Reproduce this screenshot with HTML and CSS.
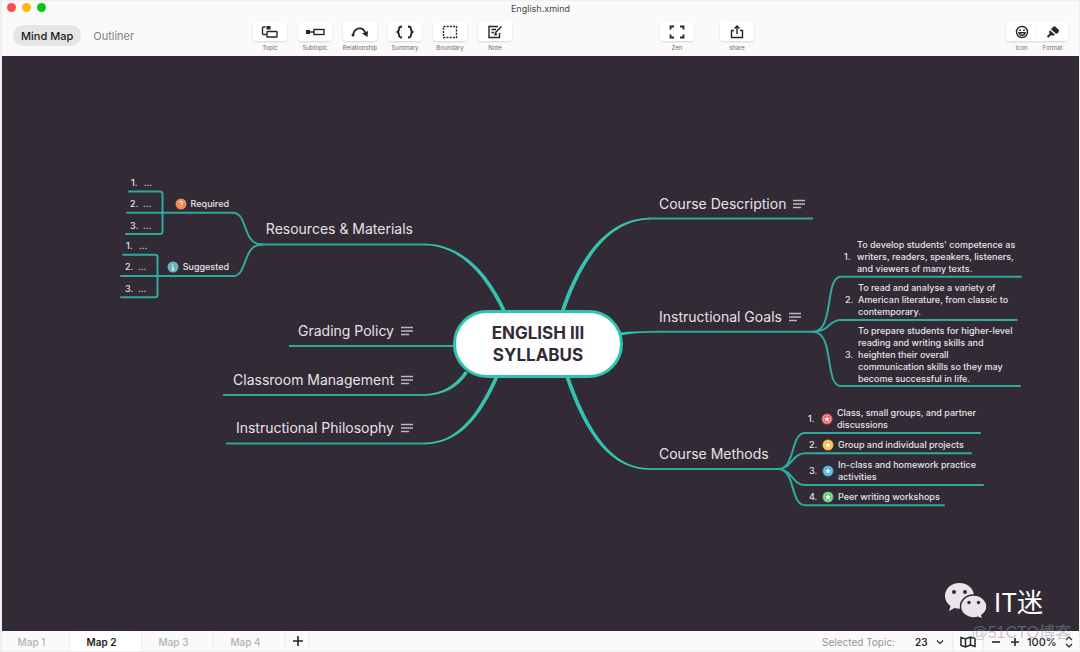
FILE: index.html
```html
<!DOCTYPE html>
<html lang="en">
<head>
<meta charset="utf-8">
<title>English.xmind</title>
<link rel="stylesheet" href="styles.css">
</head>
<body>
<div class="window">
  <header class="header">
    <div class="titlebar">
      <div class="lights"><span class="light close"></span><span class="light minimize"></span><span class="light zoom"></span></div>
      <span class="title">English.xmind</span>
    </div>
    <div class="toolbar">
      <nav class="modes">
        <button class="mode active">Mind Map</button>
        <button class="mode">Outliner</button>
      </nav>
      <div class="tools">
        <button class="tool"><span class="face"><svg class="icon" viewBox="0 0 18 16"><path d="M4.500 3H2.500Q1.500 3 1.500 4V9.500Q1.500 10.500 2.500 10.500H5.500"/><rect x="6" y="7.500" width="10" height="5.500" rx=".5"/><path class="solid" d="M5.500 2h4v3.500h-4z"/></svg></span>Topic</button>
        <button class="tool"><span class="face"><svg class="icon wide" viewBox="0 0 20 16"><path d="M4 8h5"/><path class="solid" d="M1 6h4v4H1z"/><rect x="9" y="5.500" width="10" height="5"/></svg></span>Subtopic</button>
        <button class="tool"><span class="face"><svg class="icon wide" viewBox="0 0 20 16"><path class="heavy" d="M3 11C5 2.500 13 2.500 15.500 9"/><circle class="solid" cx="3" cy="11" r="1.500"/><path class="solid" d="M12 9.500L18 7l-.5 6z"/></svg></span>Relationship</button>
        <button class="tool"><span class="face"><svg class="icon wide" viewBox="0 0 20 16"><path class="heavy" d="M7 2.500Q4 2.500 4 5Q4 8 1.500 8Q4 8 4 11Q4 13.500 7 13.500M13 2.500q3 0 3 2.500q0 3 2.500 3q-2.500 0-2.500 3q0 2.500-3 2.500"/></svg></span>Summary</button>
        <button class="tool"><span class="face"><svg class="icon" viewBox="0 0 18 16"><rect x="2.500" y="2.500" width="13" height="11" stroke-dasharray="2 1.200"/></svg></span>Boundary</button>
        <button class="tool"><span class="face"><svg class="icon" viewBox="0 0 18 16"><path d="M12 2.500H3v11h10.500V9M5.500 5.500H10M5.500 8.500H8M9 10.500l1-2.500 5.500-5.500M8.500 11l2.500-1"/></svg></span>Note</button>
      </div>
      <div class="gap-a"></div>
      <div class="tools spaced">
        <button class="tool"><span class="face"><svg class="icon" viewBox="0 0 18 16"><path class="heavy" d="M2.500 5.500V2.500H6M12 2.500h3.500v3M15.500 10.500v3H12M6 13.500H2.500v-3"/></svg></span>Zen</button>
        <button class="tool"><span class="face"><svg class="icon" viewBox="0 0 18 16"><path d="M6 6.500H3.500v7h11v-7H12M9 10V2.500M6.500 4.500L9 2l2.500 2.500"/></svg></span>share</button>
      </div>
      <div class="gap-b"></div>
      <div class="tools joined">
        <button class="tool"><span class="face"><svg class="icon" viewBox="0 0 18 16"><circle cx="9" cy="8" r="5.500"/><path d="M6 8.800h6Q11.500 11.200 9 11.200T6 8.800z"/><circle class="solid" cx="7" cy="6.200" r=".9"/><circle class="solid" cx="11" cy="6.200" r=".9"/></svg></span>Icon</button>
        <button class="tool"><span class="face"><svg class="icon" viewBox="0 0 18 16"><path class="solid" d="M8.500 3.500l2-1.500 4.500 4-.8 3-2.200.8-5-4.500zM6 6.200l5 4.600-2.200 1-1.500-.8-3 2.700-1.500-1.400 2.900-2.600-.6-2z"/></svg></span>Format</button>
      </div>
    </div>
  </header>

  <main class="canvas">
    <div class="stage">
      <svg class="lines" viewBox="2 56 1076 575" aria-hidden="true">
        <g class="taper">
          <path d="M507 313C488 270 460 244 425 243.700V245.300C458 246 484 272 503 313z"/>
          <path d="M560 313C580 252 610 218 650 217.800V219.400C612 220 584 254 564 313z"/>
          <path d="M620 332.500Q634 331 658 331V332.500Q634 332.500 620 335.500z"/>
          <path d="M565 376C586 438 612 469.500 650 469.800V468.200C614 468 590 436 569 376z"/>
          <path d="M499 376C480 420 458 443.500 425 444.300V442.700C456 442 476 418 495 376z"/>
          <path d="M468 373Q453 395 425 395.800V394.200Q450 393 465 371z"/>
        </g>
        <g class="main-line">
          <path d="M260 244.500H427M289 346H455M223 395H427M226 443.500H427M648 218.500H813M655 331.700H816M648 469H780"/>
        </g>
        <g class="sub-line">
          <path d="M129 191.500H160Q162.500 191.500 162.500 194V231.500Q162.500 234 160 234H126"/>
          <path d="M127 212.700H233C248 212.700 242 244.500 262 244.500"/>
          <path d="M123 254.700H155Q157.500 254.700 157.500 257V295Q157.500 297.300 155 297.300H121"/>
          <path d="M121 276H233C248 276 242 244.500 262 244.500"/>
          <path d="M813 331.700C835 331.700 824 276.800 841 276.800H1021M813 331.700C830 331.700 828 320 841 320H1017M813 331.700C835 331.700 824 386 841 386H1020"/>
          <path d="M778 469C796 469 790 433 805 433H980M778 469C792 469 792 453.300 805 453.300H971M778 469C792 469 792 485 805 485H983M778 469C796 469 790 505.300 805 505.300H944"/>
        </g>
      </svg>

      <h1 class="root">ENGLISH III<br>SYLLABUS</h1>

      <div class="topic course-description">Course Description<svg class="note" viewBox="0 0 12 10"><path d="M0 1.500H12M0 5H12M0 8.500H8"/></svg></div>
      <div class="topic instructional-goals">Instructional Goals<svg class="note" viewBox="0 0 12 10"><path d="M0 1.500H12M0 5H12M0 8.500H8"/></svg></div>
      <div class="topic course-methods">Course Methods</div>
      <div class="topic resources">Resources &amp; Materials</div>
      <div class="topic grading">Grading Policy<svg class="note" viewBox="0 0 12 10"><path d="M0 1.500H12M0 5H12M0 8.500H8"/></svg></div>
      <div class="topic classroom">Classroom Management<svg class="note" viewBox="0 0 12 10"><path d="M0 1.500H12M0 5H12M0 8.500H8"/></svg></div>
      <div class="topic philosophy">Instructional Philosophy<svg class="note" viewBox="0 0 12 10"><path d="M0 1.500H12M0 5H12M0 8.500H8"/></svg></div>

      <div class="sub required"><svg class="marker orange" viewBox="0 0 12 12"><circle cx="6" cy="6" r="5.500"/><path class="stroke" d="M4.500 4.500Q4.500 3.200 6 3.200T7.500 4.600Q7.500 5.500 6 6.200V7M6 8.200v1"/></svg>Required</div>
      <div class="sub suggested"><svg class="marker teal" viewBox="0 0 12 12"><circle cx="6" cy="6" r="5.500"/><path class="stroke" d="M6 3v1M5 5.500h1V9M4.800 9h2.400"/></svg>Suggested</div>

      <div class="sub req-1"><span class="num">1.</span>...</div>
      <div class="sub req-2"><span class="num">2.</span>...</div>
      <div class="sub req-3"><span class="num">3.</span>...</div>
      <div class="sub sug-1"><span class="num">1.</span>...</div>
      <div class="sub sug-2"><span class="num">2.</span>...</div>
      <div class="sub sug-3"><span class="num">3.</span>...</div>

      <div class="sub goal-1"><span class="num">1.</span><span>To develop students' competence as<br>writers, readers, speakers, listeners,<br>and viewers of many texts.</span></div>
      <div class="sub goal-2"><span class="num">2.</span><span>To read and analyse a variety of<br>American literature, from classic to<br>contemporary.</span></div>
      <div class="sub goal-3"><span class="num">3.</span><span>To prepare students for higher-level<br>reading and writing skills and<br>heighten their overall<br>communication skills so they may<br>become successful in life.</span></div>

      <div class="sub method-1"><span class="num">1.</span><svg class="marker red" viewBox="0 0 12 12"><circle cx="6" cy="6" r="5.500"/><circle class="ring" cx="6" cy="6" r="4"/><path class="star" d="M6 3l.9 2 2.100.2-1.600 1.400.5 2.100L6 7.600 4.100 8.700l.5-2.100L3 5.200 5.100 5z"/></svg><span>Class, small groups, and partner<br>discussions</span></div>
      <div class="sub method-2"><span class="num">2.</span><svg class="marker yellow" viewBox="0 0 12 12"><circle cx="6" cy="6" r="5.500"/><circle class="ring" cx="6" cy="6" r="4"/><path class="star" d="M6 3l.9 2 2.100.2-1.600 1.400.5 2.100L6 7.600 4.100 8.700l.5-2.100L3 5.200 5.100 5z"/></svg><span>Group and individual projects</span></div>
      <div class="sub method-3"><span class="num">3.</span><svg class="marker blue" viewBox="0 0 12 12"><circle cx="6" cy="6" r="5.500"/><circle class="ring" cx="6" cy="6" r="4"/><path class="star" d="M6 3l.9 2 2.100.2-1.600 1.400.5 2.100L6 7.600 4.100 8.700l.5-2.100L3 5.200 5.100 5z"/></svg><span>In-class and homework practice<br>activities</span></div>
      <div class="sub method-4"><span class="num">4.</span><svg class="marker green" viewBox="0 0 12 12"><circle cx="6" cy="6" r="5.500"/><circle class="ring" cx="6" cy="6" r="4"/><path class="star" d="M6 3l.9 2 2.100.2-1.600 1.400.5 2.100L6 7.600 4.100 8.700l.5-2.100L3 5.200 5.100 5z"/></svg><span>Peer writing workshops</span></div>
    </div>
    <div class="brand">
      <svg class="wechat" viewBox="0 0 44 38"><path d="M15.500 1C7 1 1 6.700 1 14c0 4.200 2.200 7.700 5.500 10L5 29l5.500-3c1.800.5 3.300.7 5 .7C24 26.700 30 21 30 14S24 1 15.500 1z"/><path class="front" d="M29.500 13C22.300 13 16.500 18 16.500 24.500S22.300 36 29.500 36c1.700 0 3.200-.3 4.600-.8L39 37.500l-1.200-4.200C40.800 31.200 43 28.200 43 24.500 43 18 36.700 13 29.500 13z"/><g class="eye"><circle cx="10" cy="10" r="2"/><circle cx="21" cy="10" r="2"/><circle cx="25" cy="20.500" r="1.700"/><circle cx="34.500" cy="20.500" r="1.700"/></g></svg>
      <span>IT迷</span>
    </div>
  </main>

  <footer class="footer">
    <nav class="sheets">
      <button class="sheet">Map 1</button>
      <button class="sheet active">Map 2</button>
      <button class="sheet">Map 3</button>
      <button class="sheet">Map 4</button>
      <button class="add" aria-label="Add map"><svg viewBox="0 0 10 10"><path d="M5 0V10M0 5H10"/></svg></button>
    </nav>
    <div class="status">
      <label class="selected" for="topic-count">Selected Topic:</label>
      <span class="picker count"><select id="topic-count"><option>23</option></select><svg viewBox="0 0 8 12"><path d="M1 4.500l3 3 3-3"/></svg></span>
      <button class="overview" aria-label="Map overview"><svg viewBox="0 0 16 12"><path d="M1 1.500L5.500 3L10.500 1L15 2.500V10.500L10.500 9L5.500 11L1 9.500zM5.500 3V11M10.500 1V9"/></svg></button>
      <button class="step" aria-label="Zoom out"><svg viewBox="0 0 10 10"><path d="M1 5H9"/></svg></button>
      <button class="step" aria-label="Zoom in"><svg viewBox="0 0 10 10"><path d="M5 1V9M1 5H9"/></svg></button>
      <span class="picker scale"><select aria-label="Zoom level"><option>100%</option></select><svg viewBox="0 0 8 12"><path d="M1 4l3-3 3 3M1 8l3 3 3-3"/></svg></span>
    </div>
  </footer>
  <span class="watermark">@51CTO博客</span>
</div>
</body>
</html>
```

FILE: styles.css
```css
* { box-sizing: border-box; }

body {
  margin: 0;
  background: #f0f0f0;
  font-family: Inter, "Noto Sans CJK SC", sans-serif;
}

button, select {
  margin: 0;
  padding: 0;
  border: 0;
  background: none;
  color: inherit;
  font: inherit;
}

svg { display: block; fill: none; stroke: currentColor; }

.window {
  position: relative;
  display: flex;
  flex-direction: column;
  min-height: 100vh;
  padding: 1px 1px 1px 2px;
}

/* Header */
.header { height: 55px; background: #fafafa; padding-bottom: 1px; }

.titlebar { display: flex; align-items: center; justify-content: center; height: 15px; position: relative; }
.lights { position: absolute; left: 5px; top: 2px; display: flex; gap: 6px; }
.light { width: 9px; height: 9px; border-radius: 50%; }
.close { background: #fc4f49; }
.minimize { background: #fdb90b; }
.zoom { background: #08c815; }
.title { font-size: 9px; color: #484848; }

.toolbar { display: flex; align-items: flex-start; padding: 6px 11px 0; }
.modes { display: flex; gap: 4px; flex: 0 0 240px; padding-top: 3px; }
.mode { height: 21px; padding: 0 8px; border-radius: 11px; font-size: 11px; color: #808080; }
.mode.active { background: #e5e5e5; color: #1c1c1c; font-weight: 500; }

.tools { display: flex; gap: 11px; }
.tools.spaced { gap: 26px; }
.tools.joined { gap: 0; }
.tool {
  display: flex;
  flex-direction: column;
  align-items: center;
  gap: 3px;
  width: 34px;
  font-size: 6px;
  line-height: 8px;
  color: #6d6d6d;
  white-space: nowrap;
}
.face {
  display: flex;
  align-items: center;
  justify-content: center;
  width: 34px;
  height: 19px;
  border-radius: 3px;
  background: #fff;
  box-shadow: 0 1px 2px rgba(0, 0, 0, .15);
  color: #262626;
}
.joined .tool, .joined .face { width: 31px; }
.joined .tool:first-child .face { border-radius: 3px 0 0 3px; }
.joined .tool:last-child .face { border-radius: 0 3px 3px 0; }
.icon { width: 18px; height: 16px; stroke-width: 1.4; }
.icon.wide { width: 20px; }
.solid { fill: currentColor; stroke: none; }
.heavy { stroke-width: 1.8; }
.gap-a { flex: 148 1 0; }
.gap-b { flex: 252 1 0; }

/* Canvas */
.canvas {
  position: relative;
  flex: 1;
  display: flex;
  align-items: center;
  justify-content: center;
  overflow: hidden;
  padding-right: 1px;
  background: #322a35;
}
.stage { position: relative; flex: none; width: 1076px; height: 575px; }
.lines { width: 100%; height: 100%; }
.taper { fill: #35c2ae; stroke: none; }
.main-line { stroke: #31aa9e; stroke-width: 2; }
.sub-line { stroke: #31aa9e; stroke-width: 2; stroke-linecap: round; }

.root {
  position: absolute;
  left: 451px;
  top: 254px;
  width: 170px;
  margin: 0;
  padding: 9px 0 9px;
  border: 3px solid #2cc5ae;
  border-radius: 35px;
  background: #fff;
  color: #322a35;
  font-size: 17px;
  font-weight: 700;
  line-height: 22px;
  text-align: center;
}

.topic {
  position: absolute;
  display: flex;
  align-items: center;
  gap: 7px;
  color: #e6e3e8;
  font-size: 14px;
  font-weight: 400;
  line-height: 20px;
  white-space: nowrap;
}
.note { width: 12px; height: 10px; stroke: #bdb8c0; stroke-width: 1.5; }
.course-description { left: 657px; top: 138px; }
.instructional-goals { left: 657px; top: 251px; }
.course-methods { left: 657px; top: 388px; }
.resources { right: 665px; top: 163px; }
.grading { right: 665px; top: 265px; }
.classroom { right: 665px; top: 314px; }
.philosophy { right: 665px; top: 362px; }

.sub {
  position: absolute;
  display: flex;
  align-items: center;
  gap: 4px;
  color: #e6e3e8;
  font-size: 9px;
  font-weight: 500;
  line-height: 12px;
  white-space: nowrap;
}
.num { width: 9px; }
.required { right: 849px; top: 142px; }
.suggested { right: 849px; top: 205px; }
.req-1 { left: 129px; top: 121px; }
.req-2 { left: 128px; top: 142px; }
.req-3 { left: 128px; top: 164px; }
.sug-1 { left: 124px; top: 184px; }
.sug-2 { left: 123px; top: 205px; }
.sug-3 { left: 123px; top: 227px; }
.goal-1 { left: 842px; top: 183px; }
.goal-2 { left: 843px; top: 226px; }
.goal-3 { left: 843px; top: 269px; }
.method-1 { left: 806px; top: 351px; }
.method-2 { left: 807px; top: 383px; }
.method-3 { left: 807px; top: 403px; }
.method-4 { left: 807px; top: 435px; }

.marker { width: 12px; height: 12px; fill: currentColor; stroke: none; }
.marker .stroke { fill: none; stroke: #fff; }
.marker .ring { fill: none; stroke: #fff; stroke-width: .6; opacity: .7; }
.marker .star { fill: #fff; }
.orange { color: #ee8a51; }
.teal { color: #69b3b9; }
.red { color: #e5555a; }
.yellow { color: #efb33c; }
.blue { color: #35a7cf; }
.green { color: #56c465; }

.brand {
  position: absolute;
  right: 36px;
  bottom: 11px;
  display: flex;
  align-items: center;
  gap: 6px;
  color: #fff;
  font-family: "Noto Sans CJK SC", sans-serif;
  font-size: 26px;
  line-height: 38px;
}
.wechat { width: 44px; height: 38px; fill: #e8e6ea; stroke: none; }
.wechat .front { stroke: #322a35; stroke-width: 1.5; }
.wechat .eye { fill: #322a35; }

/* Footer */
.footer {
  display: flex;
  justify-content: space-between;
  height: 20px;
  background: #fafafa;
  color: #262626;
  font-size: 10px;
}
.sheets { display: flex; }
.sheet { width: 72px; padding: 2px 8px 0 0; border-right: 1px solid #ececec; color: #b3b3b3; font-weight: 500; }
.sheet:first-child { width: 68px; }
.sheet.active { background: #fff; color: #1c1c1c; font-weight: 600; }
.add { width: 24px; border-right: 1px solid #ececec; }
.add svg { width: 10px; height: 10px; margin: 0 auto; stroke-width: 1.6; }

.status { display: flex; align-items: center; padding: 2px 6px 0 0; }
.selected { margin-right: 20px; color: #969696; }
.picker { display: flex; align-items: center; gap: 8px; font-weight: 600; }
.picker select { appearance: none; }
.picker svg { width: 8px; height: 12px; stroke-width: 1.2; }
.count { padding-right: 8px; }
.overview { height: 18px; padding: 0 7px; border: solid #ececec; border-width: 0 1px; }
.overview svg { width: 16px; height: 12px; stroke-width: 1.5; }
.step { margin-left: 7px; }
.step + .step { margin-left: 9px; }
.step svg { width: 10px; height: 10px; stroke-width: 1.6; }
.scale { margin-left: 7px; font-weight: 500; font-size: 11px; }

.watermark {
  position: absolute;
  right: 9px;
  bottom: 7px;
  color: rgba(150, 150, 150, .5);
  font-family: "Liberation Sans", "Noto Sans CJK SC", sans-serif;
  font-size: 16px;
  line-height: 24px;
  pointer-events: none;
}
```
